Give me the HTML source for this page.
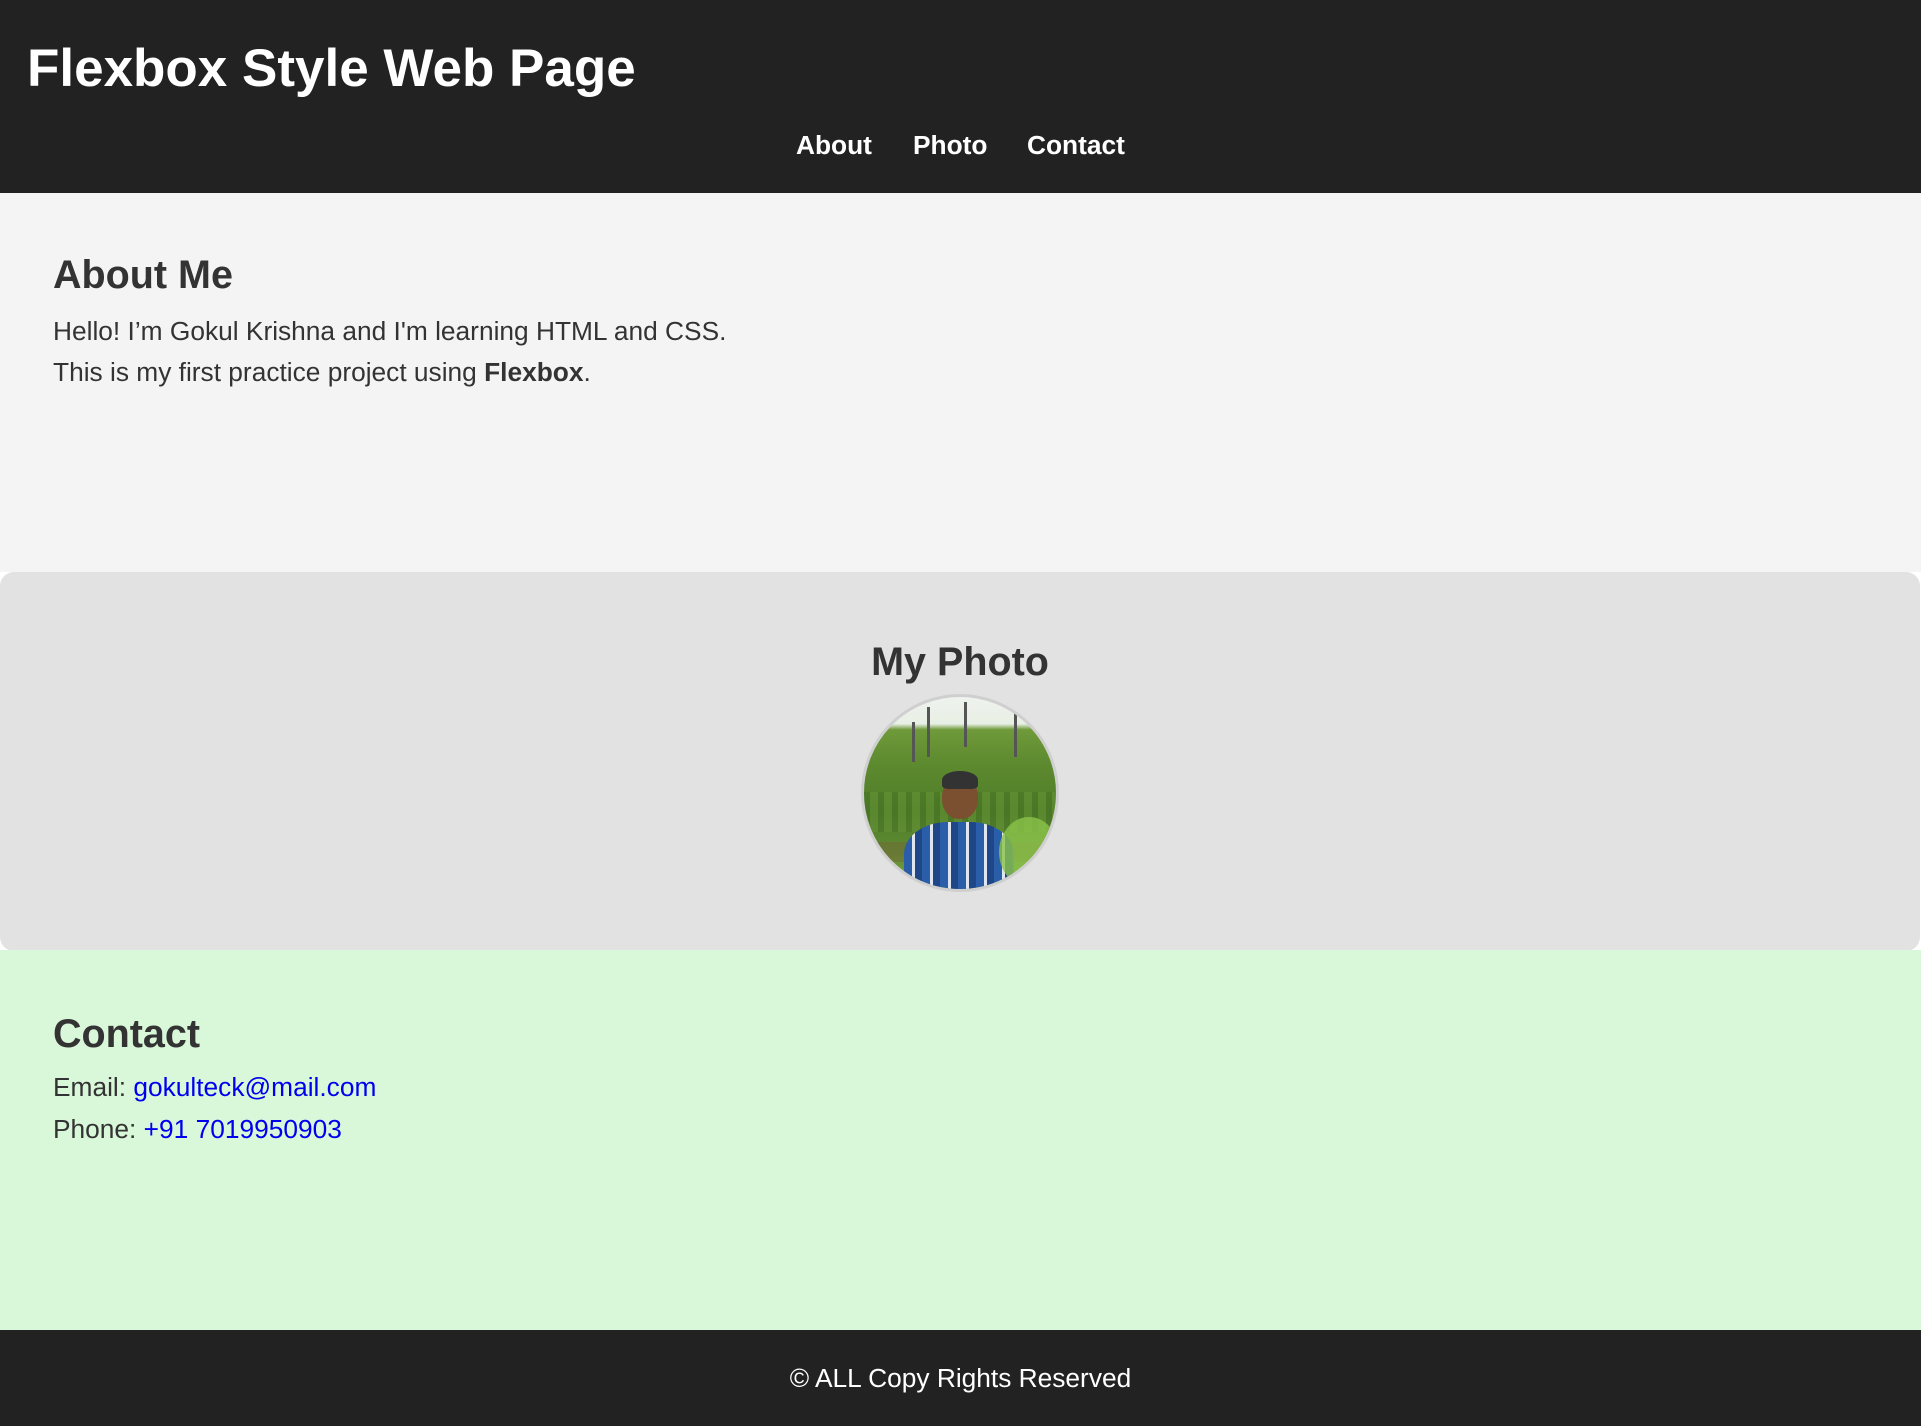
<!DOCTYPE html>
<html><head><meta charset="utf-8"><style>
*{margin:0;padding:0;box-sizing:border-box}
html,body{width:1921px;height:1426px;overflow:hidden;background:#fff;font-family:"Liberation Sans",Arial,sans-serif;color:#333}
.a{position:absolute;white-space:nowrap;line-height:1.15}
#hdr{position:absolute;left:0;top:0;width:1921px;height:193px;background:#222}
#about{position:absolute;left:0;top:193px;width:1921px;height:379px;background:#f4f4f4}
#photo{position:absolute;left:0;top:572px;width:1920px;height:379px;background:#e2e2e2;border-radius:14px}
#contact{position:absolute;left:0;top:950px;width:1921px;height:380px;background:#d9f7d9}
#foot{position:absolute;left:0;top:1330px;width:1921px;height:96px;background:#222}
.h2{font-size:39.5px;font-weight:bold}
.p{font-size:26.3px}
a{color:#00e;text-decoration:none}
#circ{position:absolute;left:861px;top:694px;width:198px;height:198px;border-radius:50%;border:3.5px solid #cfcfcf;overflow:hidden;
background:linear-gradient(180deg,#eef3ee 0%,#e8efe4 14%,#6f9a3a 17%,#5d8a2f 35%,#4f7d28 60%,#5e8a33 80%,#7aa340 100%)}
</style></head><body>
<div id="hdr"></div>
<div class="a" style="left:27px;top:38.7px;font-size:53px;font-weight:bold;color:#fff">Flexbox Style Web Page</div>
<div class="a" style="left:796px;top:130px;font-size:26.3px;font-weight:bold;color:#fff">About</div>
<div class="a" style="left:913px;top:130px;font-size:26.3px;font-weight:bold;color:#fff">Photo</div>
<div class="a" style="left:1027px;top:130px;font-size:26.3px;font-weight:bold;color:#fff">Contact</div>

<div id="about"></div>
<div class="a h2" style="left:53px;top:253px">About Me</div>
<div class="a p" style="left:53px;top:315.5px">Hello! I’m Gokul Krishna and I'm learning HTML and CSS.</div>
<div class="a p" style="left:53px;top:357px">This is my first practice project using <b>Flexbox</b>.</div>

<div id="photo"></div>
<div class="a h2" style="left:0;width:1920px;text-align:center;top:640px">My Photo</div>
<div id="circ">
  <div style="position:absolute;left:0;top:95px;width:100%;height:40px;background:repeating-linear-gradient(90deg,#3f6a20 0 6px,#6e9b3a 6px 14px);opacity:.35"></div>
  <div style="position:absolute;left:0;top:145px;width:100%;height:20px;background:#7a5a3a;opacity:.35"></div>
  <div style="position:absolute;left:48px;top:25px;width:3px;height:40px;background:#555"></div>
  <div style="position:absolute;left:63px;top:10px;width:3px;height:50px;background:#555"></div>
  <div style="position:absolute;left:100px;top:5px;width:3px;height:45px;background:#555"></div>
  <div style="position:absolute;left:150px;top:15px;width:3px;height:45px;background:#555"></div>
  <div style="position:absolute;left:78px;top:78px;width:36px;height:44px;border-radius:50% 50% 45% 45%;background:#7a5030"></div>
  <div style="position:absolute;left:78px;top:74px;width:36px;height:18px;border-radius:50% 50% 20% 20%;background:#333"></div>
  <div style="position:absolute;left:40px;top:125px;width:110px;height:80px;border-radius:40% 40% 0 0;background:repeating-linear-gradient(90deg,#2a5ea8 0 8px,#dfe6f0 8px 11px,#1f4788 11px 18px),#2a5ea8"></div>
  <div style="position:absolute;left:135px;top:120px;width:60px;height:70px;border-radius:50%;background:#8bc34a;opacity:.8"></div>
</div>

<div id="contact"></div>
<div class="a h2" style="left:53px;top:1012px">Contact</div>
<div class="a p" style="left:53px;top:1072px">Email: <a>gokulteck@mail.com</a></div>
<div class="a p" style="left:53px;top:1114px">Phone: <a>+91 7019950903</a></div>

<div id="foot"></div>
<div class="a p" style="left:0;width:1921px;text-align:center;top:1363px;color:#fff">© ALL Copy Rights Reserved</div>
</body></html>
